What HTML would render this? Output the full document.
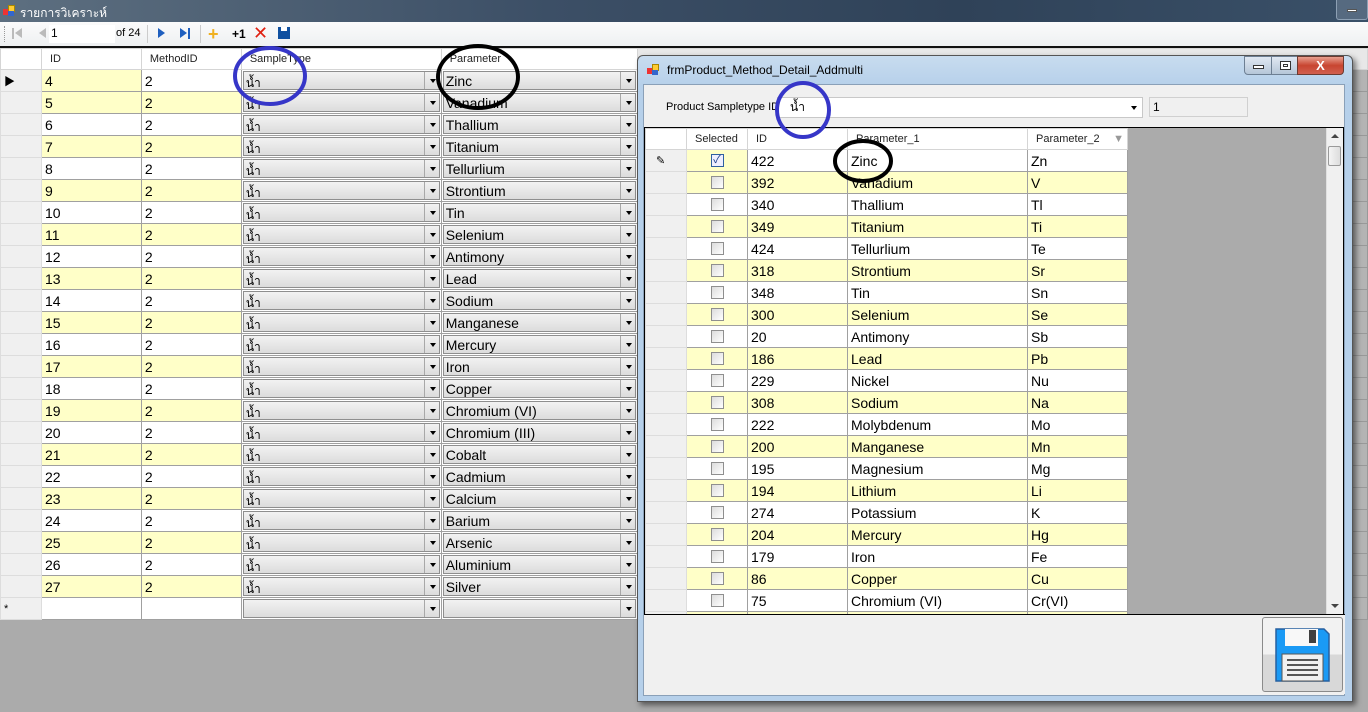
<!DOCTYPE html>
<html><head><meta charset="utf-8"><style>
*{box-sizing:border-box;margin:0;padding:0}
body{width:1368px;height:712px;overflow:hidden;background:#ababab;font-family:"Liberation Sans","Noto Sans CJK SC",sans-serif;position:relative}
.abs{position:absolute}
table{border-collapse:collapse;table-layout:fixed;position:absolute}
td,th{height:22px;border:1px solid #a0a0a0;font-size:14px;font-weight:normal;text-align:left;padding:0 3px;white-space:nowrap;overflow:hidden}
th{height:21px;font-size:11px;color:#222;background:#fff;border-color:#d5d5d5;padding-left:8px}
td.rh{background:#f0f0f0;border-color:#ddd;font-size:11px}
tr.y td.c{background:#ffffc8}
td.c{background:#fff}
td.g{background:#b4b4b4;border-color:#999}
td.dd{padding:1px;background:#fff}
.dd div{height:19px;border:1px solid #8e8e8e;background:linear-gradient(#f2f2f2,#dcdcdc);position:relative;font-size:14px;line-height:18px;padding-left:2px;overflow:hidden}
.dd div:after{content:"";position:absolute;right:3px;top:7px;border-left:3.5px solid transparent;border-right:3.5px solid transparent;border-top:4px solid #000}
.dd div:before{content:"";position:absolute;right:14px;top:0;bottom:0;border-left:1px solid #a8a8a8}
.dd div span{font-size:12px;line-height:22px}
.cb{width:13px;height:13px;border:1px solid #8f8f8f;background:linear-gradient(135deg,#dcdcdc,#fff);margin:0 auto;display:block}
</style></head><body>
<div class="abs" style="left:0;top:0;width:1368px;height:22px;background:linear-gradient(90deg,#5d6f80,#3c4f66 40%,#2f4258 70%,#3a5068);"></div>
<div class="abs" style="left:3px;top:5px;width:12px;height:12px;"><div class="abs" style="left:0;top:4px;width:6px;height:6px;background:#e33"></div><div class="abs" style="left:5px;top:0;width:7px;height:7px;background:#fc3;border:1px solid #a80"></div><div class="abs" style="left:5px;top:6px;width:6px;height:5px;background:#36c"></div></div>
<div class="abs" style="left:20px;top:4px;font-size:12px;color:#fff">รายการวิเคราะห์</div>
<div class="abs" style="left:1336px;top:0;width:32px;height:20px;border:1px solid #8da0b4;border-top:0;background:#566a80;border-radius:0 0 3px 3px"><div class="abs" style="left:10px;top:9px;width:10px;height:3px;background:#fff;border:1px solid #555"></div></div>
<div class="abs" style="left:0;top:22px;width:1368px;height:25px;background:linear-gradient(#fbfbfb,#eef0f2);border-bottom:1px solid #111"></div>
<div class="abs" style="left:4px;top:26px;height:16px;border-left:1px dotted #999"></div>
<div class="abs" style="left:12px;top:28px;width:2px;height:11px;background:#bbb"></div><div class="abs" style="left:15px;top:28px;border-top:5.5px solid transparent;border-bottom:5.5px solid transparent;border-right:7px solid #bbb"></div>
<div class="abs" style="left:39px;top:28px;border-top:5.5px solid transparent;border-bottom:5.5px solid transparent;border-right:7px solid #bbb"></div>
<div class="abs" style="left:49px;top:25px;width:66px;height:18px;background:#fff"></div>
<div class="abs" style="left:51px;top:26px;font-size:12px">1</div>
<div class="abs" style="left:116px;top:27px;font-size:11px">of 24</div>
<div class="abs" style="left:147px;top:25px;height:18px;border-left:1px solid #ccc"></div>
<div class="abs" style="left:158px;top:28px;border-top:5.5px solid transparent;border-bottom:5.5px solid transparent;border-left:7px solid #1f5fbf"></div>
<div class="abs" style="left:180px;top:28px;border-top:5.5px solid transparent;border-bottom:5.5px solid transparent;border-left:7px solid #1f5fbf"></div><div class="abs" style="left:188px;top:28px;width:2px;height:11px;background:#1f5fbf"></div>
<div class="abs" style="left:200px;top:25px;height:18px;border-left:1px solid #ccc"></div>
<div class="abs" style="left:208px;top:25px;font-size:18px;font-weight:bold;color:#f0b020;line-height:18px">+</div>
<div class="abs" style="left:232px;top:27px;font-size:12px;font-weight:bold">+1</div>
<div class="abs" style="left:253px;top:23px;font-size:18px;color:#e02010;line-height:20px">✕</div>
<div class="abs" style="left:278px;top:27px;width:12px;height:12px;background:#1050a0"><div class="abs" style="left:3px;top:0;width:6px;height:4px;background:#fff"></div></div>
<div class="abs" style="left:0;top:47px;width:1368px;height:1px;background:#111"></div>

<table style="left:0;top:48px">
<colgroup><col style="width:41px"><col style="width:100px"><col style="width:100px"><col style="width:200px"><col style="width:196px"><col style="width:731px"></colgroup>
<tr><th style="background:#fff"></th><th>ID</th><th>MethodID</th><th>SampleType</th><th>Parameter</th><th style="background:#e8e8e8"></th></tr>
<tr><td class="rh">▶</td><td class="c" style="background:#ffffc8">4</td><td class="c">2</td><td class="dd"><div><span>น้ำ</span></div></td><td class="dd"><div>Zinc</div></td><td class="g"></td></tr>
<tr class="y"><td class="rh"></td><td class="c">5</td><td class="c">2</td><td class="dd"><div><span>น้ำ</span></div></td><td class="dd"><div>Vanadium</div></td><td class="g"></td></tr>
<tr><td class="rh"></td><td class="c">6</td><td class="c">2</td><td class="dd"><div><span>น้ำ</span></div></td><td class="dd"><div>Thallium</div></td><td class="g"></td></tr>
<tr class="y"><td class="rh"></td><td class="c">7</td><td class="c">2</td><td class="dd"><div><span>น้ำ</span></div></td><td class="dd"><div>Titanium</div></td><td class="g"></td></tr>
<tr><td class="rh"></td><td class="c">8</td><td class="c">2</td><td class="dd"><div><span>น้ำ</span></div></td><td class="dd"><div>Tellurlium</div></td><td class="g"></td></tr>
<tr class="y"><td class="rh"></td><td class="c">9</td><td class="c">2</td><td class="dd"><div><span>น้ำ</span></div></td><td class="dd"><div>Strontium</div></td><td class="g"></td></tr>
<tr><td class="rh"></td><td class="c">10</td><td class="c">2</td><td class="dd"><div><span>น้ำ</span></div></td><td class="dd"><div>Tin</div></td><td class="g"></td></tr>
<tr class="y"><td class="rh"></td><td class="c">11</td><td class="c">2</td><td class="dd"><div><span>น้ำ</span></div></td><td class="dd"><div>Selenium</div></td><td class="g"></td></tr>
<tr><td class="rh"></td><td class="c">12</td><td class="c">2</td><td class="dd"><div><span>น้ำ</span></div></td><td class="dd"><div>Antimony</div></td><td class="g"></td></tr>
<tr class="y"><td class="rh"></td><td class="c">13</td><td class="c">2</td><td class="dd"><div><span>น้ำ</span></div></td><td class="dd"><div>Lead</div></td><td class="g"></td></tr>
<tr><td class="rh"></td><td class="c">14</td><td class="c">2</td><td class="dd"><div><span>น้ำ</span></div></td><td class="dd"><div>Sodium</div></td><td class="g"></td></tr>
<tr class="y"><td class="rh"></td><td class="c">15</td><td class="c">2</td><td class="dd"><div><span>น้ำ</span></div></td><td class="dd"><div>Manganese</div></td><td class="g"></td></tr>
<tr><td class="rh"></td><td class="c">16</td><td class="c">2</td><td class="dd"><div><span>น้ำ</span></div></td><td class="dd"><div>Mercury</div></td><td class="g"></td></tr>
<tr class="y"><td class="rh"></td><td class="c">17</td><td class="c">2</td><td class="dd"><div><span>น้ำ</span></div></td><td class="dd"><div>Iron</div></td><td class="g"></td></tr>
<tr><td class="rh"></td><td class="c">18</td><td class="c">2</td><td class="dd"><div><span>น้ำ</span></div></td><td class="dd"><div>Copper</div></td><td class="g"></td></tr>
<tr class="y"><td class="rh"></td><td class="c">19</td><td class="c">2</td><td class="dd"><div><span>น้ำ</span></div></td><td class="dd"><div>Chromium (VI)</div></td><td class="g"></td></tr>
<tr><td class="rh"></td><td class="c">20</td><td class="c">2</td><td class="dd"><div><span>น้ำ</span></div></td><td class="dd"><div>Chromium (III)</div></td><td class="g"></td></tr>
<tr class="y"><td class="rh"></td><td class="c">21</td><td class="c">2</td><td class="dd"><div><span>น้ำ</span></div></td><td class="dd"><div>Cobalt</div></td><td class="g"></td></tr>
<tr><td class="rh"></td><td class="c">22</td><td class="c">2</td><td class="dd"><div><span>น้ำ</span></div></td><td class="dd"><div>Cadmium</div></td><td class="g"></td></tr>
<tr class="y"><td class="rh"></td><td class="c">23</td><td class="c">2</td><td class="dd"><div><span>น้ำ</span></div></td><td class="dd"><div>Calcium</div></td><td class="g"></td></tr>
<tr><td class="rh"></td><td class="c">24</td><td class="c">2</td><td class="dd"><div><span>น้ำ</span></div></td><td class="dd"><div>Barium</div></td><td class="g"></td></tr>
<tr class="y"><td class="rh"></td><td class="c">25</td><td class="c">2</td><td class="dd"><div><span>น้ำ</span></div></td><td class="dd"><div>Arsenic</div></td><td class="g"></td></tr>
<tr><td class="rh"></td><td class="c">26</td><td class="c">2</td><td class="dd"><div><span>น้ำ</span></div></td><td class="dd"><div>Aluminium</div></td><td class="g"></td></tr>
<tr class="y"><td class="rh"></td><td class="c">27</td><td class="c">2</td><td class="dd"><div><span>น้ำ</span></div></td><td class="dd"><div>Silver</div></td><td class="g"></td></tr>
<tr><td class="rh">*</td><td class="c"></td><td class="c"></td><td class="dd"><div></div></td><td class="dd"><div></div></td><td class="g"></td></tr>
</table>
<div class="abs" style="left:0;top:620px;width:1368px;height:92px;background:#ababab"></div>

<div class="abs" style="left:637px;top:55px;width:716px;height:647px;border:1px solid #555;border-radius:6px 6px 0 0;background:linear-gradient(#c8dcef,#b6d0ea 30px,#b6d0ea);box-shadow:3px 3px 6px rgba(0,0,0,.5)"></div>
<div class="abs" style="left:647px;top:64px;width:12px;height:12px;"><div class="abs" style="left:0;top:4px;width:6px;height:6px;background:#e33"></div><div class="abs" style="left:5px;top:0;width:7px;height:7px;background:#fc3;border:1px solid #a80"></div><div class="abs" style="left:5px;top:6px;width:6px;height:5px;background:#36c"></div></div>
<div class="abs" style="left:667px;top:63px;font-size:12px;color:#000">frmProduct_Method_Detail_Addmulti</div>
<div class="abs" style="left:1244px;top:56px;width:28px;height:19px;border:1px solid #6d7f93;border-radius:0 0 0 4px;background:linear-gradient(#e0e8f2,#b5c6d8)"><div class="abs" style="left:8px;top:8px;width:11px;height:4px;border:1px solid #333;background:#fff"></div></div>
<div class="abs" style="left:1271px;top:56px;width:27px;height:19px;border:1px solid #6d7f93;background:linear-gradient(#e0e8f2,#b5c6d8)"><div class="abs" style="left:8px;top:4px;width:11px;height:9px;border:1px solid #333;background:#fff"><div class="abs" style="left:2px;top:2px;width:5px;height:3px;border:1px solid #333"></div></div></div>
<div class="abs" style="left:1297px;top:56px;width:47px;height:19px;border:1px solid #6d3a30;border-radius:0 0 4px 0;background:linear-gradient(#e8a090,#c84530 50%,#d06050);color:#fff;font-weight:bold;font-size:13px;text-align:center;line-height:18px">X</div>
<div class="abs" style="left:643px;top:84px;width:702px;height:612px;background:#f0f0f0;border:1px solid #8aa0b8"></div>
<div class="abs" style="left:666px;top:101px;font-size:11px">Product Sampletype ID</div>
<div class="abs" style="left:777px;top:97px;width:366px;height:21px;background:#fff;border:1px solid #c8c8c8;font-size:12px;line-height:19px;padding-left:12px">น้ำ<div class="abs" style="right:5px;top:8px;border-left:3.5px solid transparent;border-right:3.5px solid transparent;border-top:4px solid #000"></div></div>
<div class="abs" style="left:1149px;top:97px;width:99px;height:20px;background:#f0f0f0;border:1px solid #d0d0d0;font-size:12px;line-height:18px;padding-left:3px">1</div>
<div class="abs" style="left:644px;top:127px;width:700px;height:488px;background:#ababab;border:1px solid #000"></div>
<table style="left:645px;top:128px">
<colgroup><col style="width:41px"><col style="width:61px"><col style="width:100px"><col style="width:180px"><col style="width:100px"></colgroup>
<tr><th style="background:#fff"></th><th>Selected</th><th>ID</th><th>Parameter_1</th><th>Parameter_2 <span style="color:#999;float:right">▼</span></th></tr>
<tr><td class="rh" style="font-size:11px;padding-left:10px">✎</td><td class="c" style="background:#ffffc8"><span class="cb" style="border-color:#3060a0;background:#eef;color:#1a3d8a;font-size:11px;line-height:11px;text-align:center">✓</span></td><td class="c">422</td><td class="c">Zinc</td><td class="c">Zn</td></tr>
<tr class="y"><td class="rh"></td><td class="c"><span class="cb"></span></td><td class="c">392</td><td class="c">Vanadium</td><td class="c">V</td></tr>
<tr><td class="rh"></td><td class="c"><span class="cb"></span></td><td class="c">340</td><td class="c">Thallium</td><td class="c">Tl</td></tr>
<tr class="y"><td class="rh"></td><td class="c"><span class="cb"></span></td><td class="c">349</td><td class="c">Titanium</td><td class="c">Ti</td></tr>
<tr><td class="rh"></td><td class="c"><span class="cb"></span></td><td class="c">424</td><td class="c">Tellurlium</td><td class="c">Te</td></tr>
<tr class="y"><td class="rh"></td><td class="c"><span class="cb"></span></td><td class="c">318</td><td class="c">Strontium</td><td class="c">Sr</td></tr>
<tr><td class="rh"></td><td class="c"><span class="cb"></span></td><td class="c">348</td><td class="c">Tin</td><td class="c">Sn</td></tr>
<tr class="y"><td class="rh"></td><td class="c"><span class="cb"></span></td><td class="c">300</td><td class="c">Selenium</td><td class="c">Se</td></tr>
<tr><td class="rh"></td><td class="c"><span class="cb"></span></td><td class="c">20</td><td class="c">Antimony</td><td class="c">Sb</td></tr>
<tr class="y"><td class="rh"></td><td class="c"><span class="cb"></span></td><td class="c">186</td><td class="c">Lead</td><td class="c">Pb</td></tr>
<tr><td class="rh"></td><td class="c"><span class="cb"></span></td><td class="c">229</td><td class="c">Nickel</td><td class="c">Nu</td></tr>
<tr class="y"><td class="rh"></td><td class="c"><span class="cb"></span></td><td class="c">308</td><td class="c">Sodium</td><td class="c">Na</td></tr>
<tr><td class="rh"></td><td class="c"><span class="cb"></span></td><td class="c">222</td><td class="c">Molybdenum</td><td class="c">Mo</td></tr>
<tr class="y"><td class="rh"></td><td class="c"><span class="cb"></span></td><td class="c">200</td><td class="c">Manganese</td><td class="c">Mn</td></tr>
<tr><td class="rh"></td><td class="c"><span class="cb"></span></td><td class="c">195</td><td class="c">Magnesium</td><td class="c">Mg</td></tr>
<tr class="y"><td class="rh"></td><td class="c"><span class="cb"></span></td><td class="c">194</td><td class="c">Lithium</td><td class="c">Li</td></tr>
<tr><td class="rh"></td><td class="c"><span class="cb"></span></td><td class="c">274</td><td class="c">Potassium</td><td class="c">K</td></tr>
<tr class="y"><td class="rh"></td><td class="c"><span class="cb"></span></td><td class="c">204</td><td class="c">Mercury</td><td class="c">Hg</td></tr>
<tr><td class="rh"></td><td class="c"><span class="cb"></span></td><td class="c">179</td><td class="c">Iron</td><td class="c">Fe</td></tr>
<tr class="y"><td class="rh"></td><td class="c"><span class="cb"></span></td><td class="c">86</td><td class="c">Copper</td><td class="c">Cu</td></tr>
<tr><td class="rh"></td><td class="c"><span class="cb"></span></td><td class="c">75</td><td class="c">Chromium (VI)</td><td class="c">Cr(VI)</td></tr>
<tr class="y"><td class="rh"></td><td class="c"></td><td class="c"></td><td class="c"></td><td class="c"></td></tr>
</table>
<div class="abs" style="left:644px;top:614px;width:701px;height:80px;background:#f0f0f0;border-top:1px solid #000"></div>
<div class="abs" style="left:1326px;top:128px;width:17px;height:486px;background:#f0f0f0;border-left:1px solid #e0e0e0"></div>
<div class="abs" style="left:1331px;top:134px;border-left:4px solid transparent;border-right:4px solid transparent;border-bottom:4px solid #444"></div>
<div class="abs" style="left:1328px;top:146px;width:13px;height:20px;border:1px solid #999;border-radius:2px;background:linear-gradient(90deg,#f4f4f4,#ddd)"></div>
<div class="abs" style="left:1331px;top:604px;border-left:4px solid transparent;border-right:4px solid transparent;border-top:4px solid #444"></div>
<div class="abs" style="left:1262px;top:617px;width:81px;height:75px;border:1px solid #8a8a8a;border-radius:3px;background:linear-gradient(#f2f2f2 50%,#d8d8d8 50%)"></div>
<svg class="abs" style="left:1274px;top:627px" width="57" height="56" viewBox="0 0 57 56"><path d="M2 2H50L55 7V54H2Z" fill="#1a9af5" stroke="#2660a0" stroke-width="1.5"/><rect x="11" y="2" width="33" height="17" fill="#f8f8f8"/><rect x="35" y="3" width="7" height="13" fill="#404040"/><rect x="8" y="27" width="41" height="27" fill="#f0f0f0" stroke="#555"/><path d="M13 33H44M13 38H44M13 43H44M13 48H44" stroke="#555" stroke-width="2"/></svg>
<svg class="abs" style="left:0;top:0" width="1368" height="712"><ellipse cx="270" cy="76" rx="35" ry="28" fill="none" stroke="#3636c8" stroke-width="4"/><ellipse cx="478" cy="77" rx="40" ry="31" fill="none" stroke="#000" stroke-width="4"/><ellipse cx="803" cy="110" rx="26" ry="27" fill="none" stroke="#3636c8" stroke-width="4"/><ellipse cx="863" cy="161" rx="28" ry="20" fill="none" stroke="#000" stroke-width="4"/></svg>
</body></html>
